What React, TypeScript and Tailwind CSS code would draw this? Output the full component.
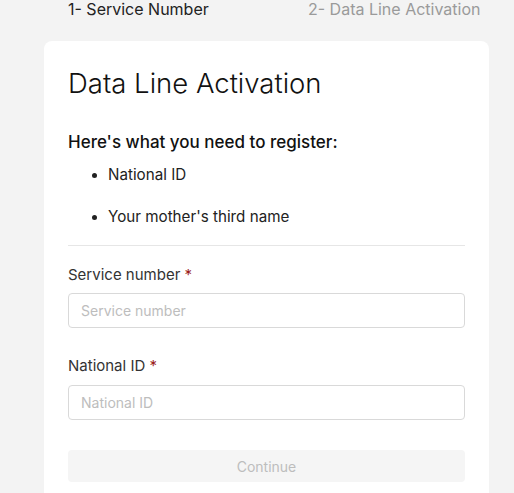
export default function App() {
  return (
    <div className="min-h-[493px] w-[514px] overflow-hidden bg-[#f3f3f3] font-['Inter','Liberation_Sans',sans-serif]">
      <div className="flex h-[18px] items-center text-[16px] leading-none">
        <div className="ml-[68px] w-[240px] text-[#222]">1- Service Number</div>
        <div className="text-[#9a9a9a]">2- Data Line Activation</div>
      </div>

      <div className="ml-[44px] mt-[23px] w-[445px] rounded-t-[8px] bg-white px-6 pb-6 pt-[25px]">
        <h1 className="text-[27.5px] font-light leading-[34px] text-[#111]">Data Line Activation</h1>

        <h2 className="mt-[30px] text-[17px] font-medium leading-[24px] text-[#111]">
          Here's what you need to register:
        </h2>

        <ul className="mt-[10px] flex flex-col gap-[20px] pl-[24px] text-[15.2px] leading-[22px] text-[#222]">
          <li className="flex items-center gap-[11px]">
            <span className="h-[5px] w-[5px] rounded-full bg-[#222]" />
            National ID
          </li>
          <li className="flex items-center gap-[11px]">
            <span className="h-[5px] w-[5px] rounded-full bg-[#222]" />
            Your mother's third name
          </li>
        </ul>

        <div className="mt-[17px] h-px bg-[#e6e6e6]" />

        <label className="mt-[18px] block text-[15px] leading-[22px] text-[#333]">
          Service number <span className="text-[#9b1c1c]">*</span>
        </label>
        <input
          placeholder="Service number"
          className="mt-[7px] block h-[35px] w-full rounded-[4px] border border-[#d9d9d9] px-3 text-[14px] text-[#333] outline-none placeholder:text-[#bdbdbd]"
        />

        <label className="mt-[27px] block text-[15px] leading-[22px] text-[#333]">
          National ID <span className="text-[#9b1c1c]">*</span>
        </label>
        <input
          placeholder="National ID"
          className="mt-[8px] block h-[35px] w-full rounded-[4px] border border-[#d9d9d9] px-3 text-[14px] text-[#333] outline-none placeholder:text-[#bdbdbd]"
        />

        <button
          disabled
          className="mt-[30px] block h-[32px] w-full rounded-[4px] bg-[#f5f5f5] text-[14px] text-[#bdbdbd]"
        >
          Continue
        </button>
      </div>
    </div>
  )
}
